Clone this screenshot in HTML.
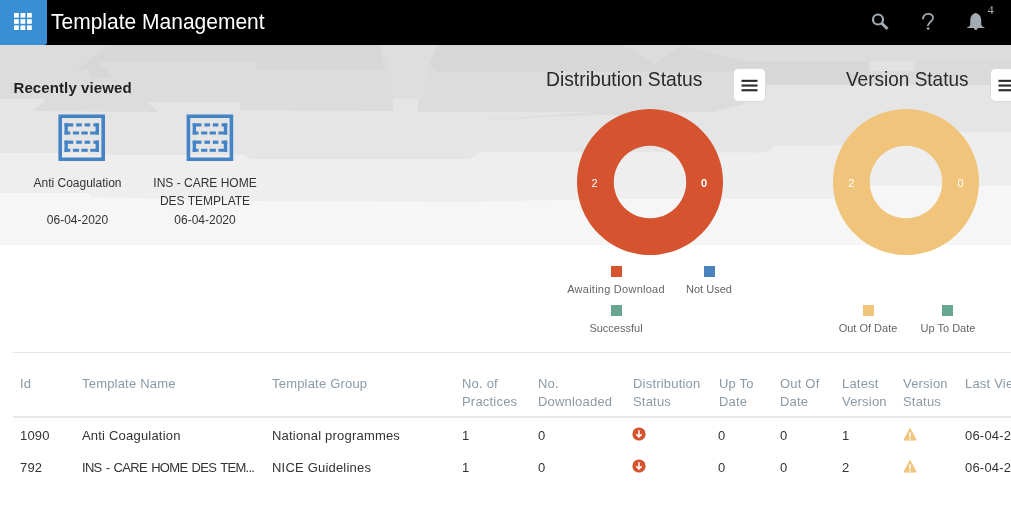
<!DOCTYPE html>
<html><head><meta charset="utf-8">
<style>
*{box-sizing:border-box;margin:0;padding:0}
html,body{width:1011px;height:512px;overflow:hidden;background:#fff;-webkit-font-smoothing:antialiased;font-family:"Liberation Sans",sans-serif;color:#333}
.abs{position:absolute;white-space:nowrap}
#hdr{position:absolute;left:0;top:0;width:1011px;height:45px;background:#000}
#apps{position:absolute;left:0;top:0;width:47px;height:45px;background:#3a8fd4;border-bottom-right-radius:3px}
#title{left:51px;top:9px;transform:scaleY(1.07);transform-origin:0 20px;font-size:21px;line-height:26px;color:#fff}
#bg{position:absolute;left:0;top:45px;width:1011px;height:200px;overflow:hidden}
.band{position:absolute;left:0;width:1011px}
#rv{left:13.5px;top:78.5px;letter-spacing:0.1px;font-size:15px;font-weight:bold;line-height:18px;color:#222}
.tile{position:absolute;text-align:center;font-size:12px;line-height:18.3px;color:#333;white-space:normal}
.ctitle{font-size:19.3px;line-height:22px;color:#2a2a2a;transform:scaleY(1.06);transform-origin:0 17px}
.menu{position:absolute;width:32px;height:33px;background:#fff;border:1px solid #d3dade;border-radius:5px}
.menu i{position:absolute;left:7.5px;width:16px;height:2.2px;background:#2a2a2a}
.leg{position:absolute;font-size:11px;line-height:14px;color:#666;text-align:center}
.sq{position:absolute;width:11px;height:11px}
.th{position:absolute;font-size:13px;line-height:18px;color:#8c9aa5;white-space:nowrap;letter-spacing:0.2px}
.td{position:absolute;font-size:13px;line-height:18px;color:#333;white-space:nowrap;letter-spacing:0.2px}
</style></head><body>
<div id="root" style="position:absolute;left:0;top:0;width:1011px;height:512px;will-change:transform">
<div id="bg">
<svg width="1011" height="200" viewBox="0 45 1011 200" style="position:absolute;left:0;top:0">
  <rect x="0" y="45" width="1011" height="200" fill="#f6f6f6"/>
  <polygon points="0,45 1011,45 1011,185.7 870,185.7 866,199 600,199 470,202 250,201 90,197 90,193 0,193" fill="#eeeeee"/>
  <polygon points="0,45 1011,45 1011,132 950,132 905,145.4 775,145.4 766,152.5 480,152 470,159 250,159 245,155 90,155 88,153 0,153" fill="#e5e5e5"/>
  <polygon points="0,45 1011,45 1011,85 740,85 745,104 713,112 418,112 418,99 393,99 393,111 240,110.5 240,102 147,102 158,112 34,111 46,99 0,99" fill="#dcdcdc"/>
  
  <polygon points="450,122.4 600,111.5 713,111.5 540,117" fill="#dcdcdc"/>
  <polygon points="107,45 380,45 385,70 256,70 256,61.3 96.9,61.3 113.7,77.6 89.5,77.6 89.5,70.2 76.6,70.2" fill="#d7d7d7"/>
  <polygon points="437,45 623,45 655,64 681,45 740,45 740,61 869,61 869,85 750,85 740,72 437,72 430,64" fill="#d7d7d7"/>
  <polygon points="681,45 1011,45 1011,61 740,61" fill="#dcdcdc"/>
  <polygon points="869,61 915,61 915,71 869,71" fill="#e2e2e2"/>
  <polygon points="869,71 915,71 915,85 869,85" fill="#dbdbdb"/>
  <polygon points="915,61 1011,61 1011,85 915,85" fill="#dadada"/>
  <polygon points="383,45 437,45 430,64 421,99 395,99" fill="#dedede"/>
</svg>
</div>
<div id="hdr">
  <div id="apps">
    <svg width="47" height="45" style="position:absolute;left:0;top:0">
      <g fill="#fff"><rect x="14" y="13" width="4.8" height="4.6"/><rect x="20.5" y="13" width="4.8" height="4.6"/><rect x="27" y="13" width="4.8" height="4.6"/><rect x="14" y="19.2" width="4.8" height="4.6"/><rect x="20.5" y="19.2" width="4.8" height="4.6"/><rect x="27" y="19.2" width="4.8" height="4.6"/><rect x="14" y="25.4" width="4.8" height="4.6"/><rect x="20.5" y="25.4" width="4.8" height="4.6"/><rect x="27" y="25.4" width="4.8" height="4.6"/></g>
    </svg>
  </div>
  <div id="title" class="abs">Template Management</div>
  <!-- search -->
  <svg class="abs" style="left:868px;top:10px" width="24" height="24" viewBox="0 0 24 24">
    <circle cx="10" cy="9.5" r="5" fill="none" stroke="#a3abb3" stroke-width="2.2"/>
    <line x1="13.5" y1="13" x2="19.5" y2="19" stroke="#a3abb3" stroke-width="3"/>
  </svg>
  <!-- help -->
  <svg class="abs" style="left:916px;top:8px" width="24" height="24" viewBox="0 0 24 24">
    <path d="M6.95 11.3 C6.95 8 9 5.85 12 5.85 C15 5.85 17.05 7.7 17.05 9.8 C17.05 12 15.3 13.2 13.8 14.6 C12.3 16 11.9 16.8 11.9 18" fill="none" stroke="#a3abb3" stroke-width="1.8"/>
    <circle cx="12.1" cy="20.5" r="1.35" fill="#a3abb3"/>
  </svg>
  <!-- bell -->
  <svg class="abs" style="left:964px;top:10px" width="24" height="24" viewBox="0 0 24 24">
    <path d="M11.6 3 C9.2 3.6 6.6 5.5 6.3 9.5 L6.2 14.8 C6.1 15.8 5 16.8 3 17.6 L3 18.1 L20.6 18.1 L20.6 17.6 C18.6 16.8 17.4 15.8 17.3 14.8 L17.2 9.5 C16.9 5.5 14.2 3.6 11.6 3 Z" fill="#a3abb3"/>
    <path d="M9.9 18 H13.7 C13.7 19.2 12.9 19.9 11.8 19.9 C10.7 19.9 9.9 19.2 9.9 18 Z" fill="#a3abb3"/>
  </svg>
  <div class="abs" style="left:987.5px;top:2.5px;font-family:'Liberation Serif',serif;font-size:12.5px;line-height:14px;color:#aaa">4</div>
</div>

<div id="rv" class="abs">Recently viewed</div>

<!-- tiles -->
<svg class="abs" style="left:58px;top:114px" width="48" height="48" viewBox="0 0 48 48">
  <g fill="#4483c5" transform="translate(0.4 0.5)">
    <path d="M0 0H46.6V46.6H0Z M3.6 3.6V43H43V3.6Z" fill-rule="evenodd"/>
    <g>
      <rect x="6.1" y="8.8" width="3.3" height="11.2"/>
      <rect x="6.1" y="8.8" width="8.8" height="3.2"/>
      <rect x="17.8" y="8.8" width="5.6" height="3.2"/>
      <rect x="26.2" y="8.8" width="5.6" height="3.2"/>
      <rect x="35" y="8.8" width="5.6" height="3.2"/>
      <rect x="37.2" y="8.8" width="3.4" height="11.2"/>
      <rect x="6.1" y="17" width="5.8" height="3"/>
      <rect x="14.5" y="17" width="6.2" height="3"/>
      <rect x="23" y="17" width="6.3" height="3"/>
      <rect x="31.8" y="17" width="8.8" height="3"/>
    </g>
    <g transform="translate(0 17.3)">
      <rect x="6.1" y="8.8" width="3.3" height="11.2"/>
      <rect x="6.1" y="8.8" width="8.8" height="3.2"/>
      <rect x="17.8" y="8.8" width="5.6" height="3.2"/>
      <rect x="26.2" y="8.8" width="5.6" height="3.2"/>
      <rect x="35" y="8.8" width="5.6" height="3.2"/>
      <rect x="37.2" y="8.8" width="3.4" height="11.2"/>
      <rect x="6.1" y="17" width="5.8" height="3"/>
      <rect x="14.5" y="17" width="6.2" height="3"/>
      <rect x="23" y="17" width="6.3" height="3"/>
      <rect x="31.8" y="17" width="8.8" height="3"/>
    </g>
  </g>
</svg>
<svg class="abs" style="left:186px;top:114px" width="48" height="48" viewBox="0 0 48 48">
  <g fill="#4483c5" transform="translate(0.6 0.5)">
    <path d="M0 0H46.6V46.6H0Z M3.6 3.6V43H43V3.6Z" fill-rule="evenodd"/>
    <g>
      <rect x="6.1" y="8.8" width="3.3" height="11.2"/>
      <rect x="6.1" y="8.8" width="8.8" height="3.2"/>
      <rect x="17.8" y="8.8" width="5.6" height="3.2"/>
      <rect x="26.2" y="8.8" width="5.6" height="3.2"/>
      <rect x="35" y="8.8" width="5.6" height="3.2"/>
      <rect x="37.2" y="8.8" width="3.4" height="11.2"/>
      <rect x="6.1" y="17" width="5.8" height="3"/>
      <rect x="14.5" y="17" width="6.2" height="3"/>
      <rect x="23" y="17" width="6.3" height="3"/>
      <rect x="31.8" y="17" width="8.8" height="3"/>
    </g>
    <g transform="translate(0 17.3)">
      <rect x="6.1" y="8.8" width="3.3" height="11.2"/>
      <rect x="6.1" y="8.8" width="8.8" height="3.2"/>
      <rect x="17.8" y="8.8" width="5.6" height="3.2"/>
      <rect x="26.2" y="8.8" width="5.6" height="3.2"/>
      <rect x="35" y="8.8" width="5.6" height="3.2"/>
      <rect x="37.2" y="8.8" width="3.4" height="11.2"/>
      <rect x="6.1" y="17" width="5.8" height="3"/>
      <rect x="14.5" y="17" width="6.2" height="3"/>
      <rect x="23" y="17" width="6.3" height="3"/>
      <rect x="31.8" y="17" width="8.8" height="3"/>
    </g>
  </g>
</svg>

<div class="tile" style="left:12.5px;top:174px;width:130px">Anti Coagulation<br>&nbsp;<br>06-04-2020</div>
<div class="tile" style="left:140px;top:174px;width:130px">INS - CARE HOME DES TEMPLATE<br>06-04-2020</div>

<!-- distribution -->
<div class="abs ctitle" style="left:546px;top:68.5px">Distribution Status</div>
<svg class="abs" style="left:733px;top:68px" width="34" height="34" viewBox="0 0 34 34"><rect x="0.5" y="0.5" width="32" height="33" rx="5" fill="#fff" stroke="#d5dce0" stroke-width="1"/><g fill="#2a2a2a"><rect x="8.5" y="11.8" width="16" height="2.1"/><rect x="8.5" y="16.5" width="16" height="2.1"/><rect x="8.5" y="21.2" width="16" height="2.1"/></g></svg>
<svg class="abs" style="left:577px;top:109px" width="146" height="146" viewBox="0 0 146 146">
  <path d="M73 0A73 73 0 1 1 72.99 0Z M73 36.75A36.25 36.25 0 1 0 73.01 36.75Z" fill="#d6532f" fill-rule="evenodd"/>
</svg>
<div class="abs" style="left:591.5px;top:176px;font-size:11px;line-height:14px;color:#fff">2</div>
<div class="abs" style="left:701px;top:176px;font-size:11px;line-height:14px;color:#fff;font-weight:bold">0</div>
<div class="sq" style="left:611px;top:266px;background:#d6532f"></div>
<div class="sq" style="left:704px;top:266px;background:#4a82c0"></div>
<div class="sq" style="left:611px;top:305px;background:#68a592"></div>
<div class="leg abs" style="left:566px;top:282px;width:100px;letter-spacing:0.25px">Awaiting Download</div>
<div class="leg abs" style="left:669px;top:282px;width:80px">Not Used</div>
<div class="leg abs" style="left:566px;top:321px;width:100px">Successful</div>

<!-- version -->
<div class="abs ctitle" style="left:846px;top:69px;font-size:19px">Version Status</div>
<svg class="abs" style="left:990px;top:68px" width="34" height="34" viewBox="0 0 34 34"><rect x="0.5" y="0.5" width="32" height="33" rx="5" fill="#fff" stroke="#d5dce0" stroke-width="1"/><g fill="#2a2a2a"><rect x="8.5" y="11.8" width="16" height="2.1"/><rect x="8.5" y="16.5" width="16" height="2.1"/><rect x="8.5" y="21.2" width="16" height="2.1"/></g></svg>
<svg class="abs" style="left:833px;top:109px" width="146" height="146" viewBox="0 0 146 146">
  <path d="M73 0A73 73 0 1 1 72.99 0Z M73 36.75A36.25 36.25 0 1 0 73.01 36.75Z" fill="#f0c47a" fill-rule="evenodd"/>
</svg>
<div class="abs" style="left:848.2px;top:176px;font-size:11px;line-height:14px;color:#fff">2</div>
<div class="abs" style="left:957.5px;top:176px;font-size:11px;line-height:14px;color:#fff">0</div>
<div class="sq" style="left:863px;top:305px;background:#f0c47a"></div>
<div class="sq" style="left:942px;top:305px;background:#68a592"></div>
<div class="leg abs" style="left:818px;top:321px;width:100px">Out Of Date</div>
<div class="leg abs" style="left:908px;top:321px;width:80px">Up To Date</div>

<!-- table -->
<div class="abs" style="left:13px;top:352px;width:998px;height:1px;background:#e5e5e5"></div>
<div class="th" style="left:20px;top:375px">Id</div>
<div class="th" style="left:82px;top:375px">Template Name</div>
<div class="th" style="left:272px;top:375px">Template Group</div>
<div class="th" style="left:462px;top:375px">No. of<br>Practices</div>
<div class="th" style="left:538px;top:375px">No.<br>Downloaded</div>
<div class="th" style="left:633px;top:375px">Distribution<br>Status</div>
<div class="th" style="left:719px;top:375px">Up To<br>Date</div>
<div class="th" style="left:780px;top:375px">Out Of<br>Date</div>
<div class="th" style="left:842px;top:375px">Latest<br>Version</div>
<div class="th" style="left:903px;top:375px">Version<br>Status</div>
<div class="th" style="left:965px;top:375px">Last Viewed</div>
<div class="abs" style="left:13px;top:416px;width:998px;height:2px;background:#e8e8e8"></div>

<div class="td" style="left:20px;top:427px">1090</div>
<div class="td" style="left:82px;top:427px">Anti Coagulation</div>
<div class="td" style="left:272px;top:427px">National programmes</div>
<div class="td" style="left:462px;top:427px">1</div>
<div class="td" style="left:538px;top:427px">0</div>
<svg class="abs" style="left:632px;top:427px" width="14" height="14" viewBox="0 0 14 14"><circle cx="7" cy="7" r="6.6" fill="#d6532f"/><path d="M7 3.3V9.6 M4.3 7.2L7 9.9L9.7 7.2" stroke="#fff" stroke-width="1.5" fill="none"/></svg>
<div class="td" style="left:718px;top:427px">0</div>
<div class="td" style="left:780px;top:427px">0</div>
<div class="td" style="left:842px;top:427px">1</div>
<svg class="abs" style="left:903px;top:428px" width="14" height="13" viewBox="0 0 14 13" overflow="visible"><path d="M7 -0.4L13.8 12.6H0.2Z" fill="#f0c47a"/><rect x="6.2" y="4.4" width="1.6" height="4.6" fill="#fff"/><rect x="6.2" y="10" width="1.6" height="1.5" fill="#fff"/></svg>
<div class="td" style="left:965px;top:427px">06-04-2020</div>
<div class="td" style="left:20px;top:459px">792</div>
<div class="td" style="left:82px;top:459px;letter-spacing:-0.7px;word-spacing:1.3px">INS - CARE HOME DES TEM...</div>
<div class="td" style="left:272px;top:459px">NICE Guidelines</div>
<div class="td" style="left:462px;top:459px">1</div>
<div class="td" style="left:538px;top:459px">0</div>
<svg class="abs" style="left:632px;top:459px" width="14" height="14" viewBox="0 0 14 14"><circle cx="7" cy="7" r="6.6" fill="#d6532f"/><path d="M7 3.3V9.6 M4.3 7.2L7 9.9L9.7 7.2" stroke="#fff" stroke-width="1.5" fill="none"/></svg>
<div class="td" style="left:718px;top:459px">0</div>
<div class="td" style="left:780px;top:459px">0</div>
<div class="td" style="left:842px;top:459px">2</div>
<svg class="abs" style="left:903px;top:460px" width="14" height="13" viewBox="0 0 14 13" overflow="visible"><path d="M7 -0.4L13.8 12.6H0.2Z" fill="#f0c47a"/><rect x="6.2" y="4.4" width="1.6" height="4.6" fill="#fff"/><rect x="6.2" y="10" width="1.6" height="1.5" fill="#fff"/></svg>
<div class="td" style="left:965px;top:459px">06-04-2020</div>
</div>
</body></html>
